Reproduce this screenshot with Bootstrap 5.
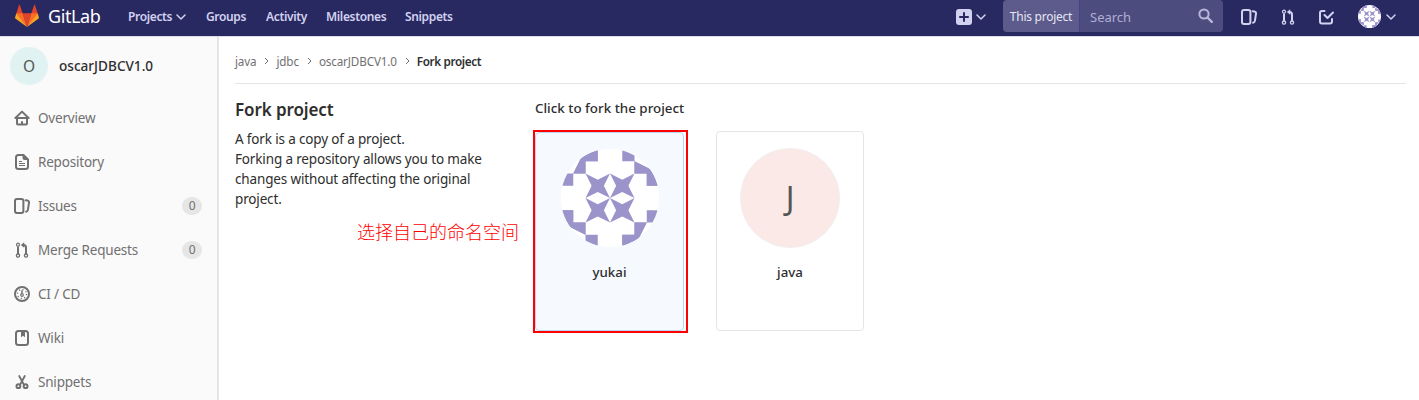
<!DOCTYPE html>
<html lang="en">
<head>
<meta charset="utf-8">
<title>Fork project · GitLab</title>
<meta name="viewport" content="width=device-width, initial-scale=1">
<link rel="stylesheet" href="https://cdn.jsdelivr.net/npm/bootstrap@5.3.0/dist/css/bootstrap.min.css">
<style>
  body { font-family: "Noto Sans", "Noto Sans CJK SC", sans-serif; font-size: 13.5px; letter-spacing: -.15px; line-height: 20px; color: #2e2e2e; background: #fff; height: 400px; overflow: hidden; }
  svg { display: block; flex: none; }
  a { text-decoration: none; color: inherit; }
  .topbar { height: 36px; background: #292961; color: #d1d1f0; box-shadow: 0 1px 0 #dcdce4; position: relative; z-index: 2; padding-left: 15px; }
  .wordmark { font-size: 18px; letter-spacing: -.4px; color: #fff; margin-left: 9px; width: 80px; line-height: 32px; }
  .topnav { font-size: 12px; font-weight: 600; line-height: 33px; letter-spacing: -.35px; }
  .topnav a { white-space: nowrap; }
  .scope { width: 77px; height: 32px; line-height: 34px; background: #5c5b8b; color: #e6e6f5; font-size: 12px; letter-spacing: -.25px; text-align: center; border-right: 1px solid #44438a; border-radius: 4px 0 0 4px; white-space: nowrap; }
  .searchbox { width: 143px; height: 32px; line-height: 34px; background: #4d4c7e; color: #b0afd4; font-size: 13px; letter-spacing: 0; padding: 0 16px 0 10px; border-radius: 0 4px 4px 0; }
  .sidebar { width: 219px; height: 364px; background: #fafafa; border-right: 2px solid #e5e5e5; flex: none; }
  .project { height: 60px; padding-left: 10px; font-weight: 500; font-size: 13.6px; letter-spacing: 0; }
  .letter { border-radius: 50%; display: flex; align-items: center; justify-content: center; color: #555; }
  .letter-sm { width: 38px; height: 38px; background: #e0f2f1; font-size: 15.5px; font-weight: 400; margin-right: 11px; }
  .letter-lg { width: 100px; height: 100px; background: #fbe9e7; font-size: 32px; border: 1px solid #f1efef; }
  .side-item { height: 44px; padding: 0 15px 0 14px; color: #707070; gap: 8px; letter-spacing: -.2px; }
  .count { width: 20px; height: 18px; line-height: 18px; border-radius: 9px; background: #e6e6e6; font-size: 12px; text-align: center; margin-left: auto; }
  .page { padding: 0 13px 0 16px; flex: 1; }
  .crumbs { height: 48px; font-size: 11.7px; border-bottom: 1px solid #e5e5e5; color: #707070; padding-top: 2px; letter-spacing: -.15px; }
  .crumbs svg { margin: 0 7px 0 8px; }
  .crumbs b { color: #2e2e2e; font-weight: 600; letter-spacing: -.35px; }
  .intro { width: 300px; flex: none; }
  .intro h4 { font-size: 17px; letter-spacing: -.1px; line-height: 20px; font-weight: 600; margin: 16px 0 9px; }
  .intro p { width: 265px; margin: 0; }
  .note { color: #f00; font-size: 18px; letter-spacing: 0; line-height: 24px; margin: 10px 0 0 122px; white-space: nowrap; font-family: "Noto Sans CJK SC", sans-serif; font-weight: 300; }
  .choose { font-size: 13.4px; letter-spacing: 0; font-weight: 500; line-height: 20px; margin-top: 14px; height: 32px; }
  .fork { width: 148px; height: 200px; border: 1px solid #e5e5e5; border-radius: 4px; padding-top: 16px; font-size: 13.3px; letter-spacing: 0; font-weight: 500; margin-top: 1px; }
  .fork-picked { border-color: #b8d6f4; background: #f6fafe; width: 149px; height: 199px; padding-top: 15px; margin: 0; }
  .outline-red { border: 2px solid #f00; width: 155px; height: 203px; margin-left: -2px; margin-right: 28px; }
  .fork .letter-lg { font-weight: 400; }
  .fork-name { margin-top: 14px; }
</style>
</head>
<body>
<svg width="0" height="0" class="position-absolute" aria-hidden="true">
  <defs>
    <symbol id="chev" viewBox="0 0 10 6"><path d="M1 1l4 4 4-4" fill="none" stroke="currentColor" stroke-width="1.5" stroke-linecap="round" stroke-linejoin="round"/></symbol>
    <symbol id="sep" viewBox="0 0 5 8"><path d="M1 1l3 3-3 3" fill="none" stroke="currentColor" stroke-width="1"/></symbol>
    <symbol id="issues" viewBox="0 0 16 16"><g fill="none" stroke="currentColor" stroke-width="2" stroke-linejoin="round" stroke-linecap="round"><rect x="1" y="1" width="8.4" height="14" rx="2"/><path d="M11.6 2.2l1.7.3q1.9.3 1.7 2.1l-1.1 7.3q-.3 1.6-1.8 1.8"/></g></symbol>
    <symbol id="merge" viewBox="0 0 16 16"><g fill="none" stroke="currentColor"><path stroke-width="2" d="M4 4.500v7.500M12 12V5.500Q12 3 9.500 3"/><circle cx="4" cy="2.700" r="1.500" stroke-width="1.200"/><circle cx="4" cy="13.600" r="1.600" stroke-width="1.300"/><circle cx="12" cy="13.600" r="1.600" stroke-width="1.300"/></g><path fill="currentColor" d="M10.200.3v5.400L6.800 3z"/></symbol>
    <symbol id="identicon" viewBox="0 0 8 8">
      <circle cx="4" cy="4" r="4" fill="#fff"/>
      <g clip-path="url(#disc)" fill="#9b94ca">
        <g id="quarter"><path d="M2 0h1v1H2v1H1zM0 2h1v1H0zM2 2l1 .5L4 2l-.5 1L4 4l-1-.5L2 4l.5-1z"/><path d="M2 0h1v1H2zM2 0v2H1z"/></g>
        <use href="#quarter" transform="rotate(90 4 4)"/><use href="#quarter" transform="rotate(180 4 4)"/><use href="#quarter" transform="rotate(270 4 4)"/>
      </g>
    </symbol>
    <clipPath id="disc"><circle cx="4" cy="4" r="4"/></clipPath>
  </defs>
</svg>

<header class="topbar d-flex align-items-start">
  <a href="#" class="d-flex">
    <svg class="mt-1" width="24" height="24" viewBox="0 0 36 36"><path fill="#e24329" d="M2 14l9.38 9v-9l-4-12.28c-.205-.632-1.176-.632-1.38 0zM34 14l-9.38 9v-9l4-12.28c.205-.632 1.176-.632 1.38 0zM18 34.38 11.38 14h13.24z"/><path fill="#fc6d26" d="M18 34.38 11.38 14H2l6 9zM18 34.38 24.62 14H34l-6 9z"/><path fill="#fca326" d="M2 14 .1 20.16c-.18.565 0 1.2.5 1.56l17.42 12.66zM34 14l1.9 6.16c.18.565 0 1.2-.5 1.56L18 34.38z"/></svg>
    <span class="wordmark">GitLab</span>
  </a>
  <nav class="topnav d-flex">
    <a href="#" class="d-flex align-items-center" style="width:78px">Projects<svg class="ms-1" width="10" height="6"><use href="#chev"/></svg></a>
    <a href="#" style="width:60px">Groups</a>
    <a href="#" style="width:60px">Activity</a>
    <a href="#" style="width:79px">Milestones</a>
    <a href="#">Snippets</a>
  </nav>
  <div class="d-flex align-items-center ms-auto" style="height:33px">
    <svg width="16" height="16" viewBox="0 0 16 16"><rect width="16" height="16" rx="3" fill="#d1d1f0"/><path d="M8 3.200v9.600M3.200 8h9.600" stroke="#292961" stroke-width="2"/></svg>
    <svg class="ms-1" style="margin-right:17px" width="10" height="6"><use href="#chev"/></svg>
  </div>
  <div class="scope">This project</div>
  <div class="searchbox d-flex justify-content-between">Search
    <svg style="margin:8px -6px 0 0" width="15" height="15" viewBox="0 0 15 15"><g fill="none" stroke="#b8b7da"><circle cx="6" cy="6" r="4.600" stroke-width="2"/><path d="M9.500 9.500l4.300 4.300" stroke-width="2.400" stroke-linecap="round"/></g></svg>
  </div>
  <div class="d-flex align-items-center" style="height:33px;width:196px;padding-left:18px">
    <svg width="16" height="16"><use href="#issues"/></svg>
    <svg style="margin-left:23px" width="16" height="16"><use href="#merge"/></svg>
    <svg style="margin-left:22px" width="16" height="16" viewBox="0 0 16 16"><g fill="none" stroke="currentColor" stroke-width="2" stroke-linecap="round" stroke-linejoin="round"><path d="M6.500 2H4Q2 2 2 4v8.500q0 2 2 2h8q2 0 2-2V10"/><path d="M6.500 6 9.500 9 15 3.500"/></g></svg>
    <svg style="margin-left:24px" width="23" height="23"><use href="#identicon"/></svg>
    <svg style="margin-left:5px" width="10" height="6"><use href="#chev"/></svg>
  </div>
</header>

<div class="d-flex">
  <aside class="sidebar">
    <a href="#" class="project d-flex align-items-center"><span class="letter letter-sm">O</span>oscarJDBCV1.0</a>
    <nav class="d-flex flex-column">
      <a href="#" class="side-item d-flex align-items-center"><svg width="16" height="16" viewBox="0 0 16 16"><g fill="none" stroke="currentColor" stroke-width="2" stroke-linejoin="round" stroke-linecap="round"><path d="M1.400 8 8 1.600 14.600 8zM3 8.500v5q0 1 1 1h8q1 0 1-1v-5"/><path d="M8 12v2" stroke-width="2"/></g></svg>Overview</a>
      <a href="#" class="side-item d-flex align-items-center"><svg width="16" height="16" viewBox="0 0 16 16"><path d="M9.500 1H4.500Q2 1 2 3.500v9q0 2.500 2.500 2.500h7q2.500 0 2.500-2.500V5.400z" fill="none" stroke="currentColor" stroke-width="2"/><path d="M8.500 1l5.500 5H10.500Q8.500 6 8.500 4z" fill="currentColor"/><path d="M5 7.500h3M5 9.500h6M5 11.500h6" stroke="currentColor"/></svg>Repository</a>
      <a href="#" class="side-item d-flex align-items-center"><svg width="16" height="16"><use href="#issues"/></svg>Issues<span class="count">0</span></a>
      <a href="#" class="side-item d-flex align-items-center"><svg width="16" height="16"><use href="#merge"/></svg>Merge Requests<span class="count">0</span></a>
      <a href="#" class="side-item d-flex align-items-center"><svg width="16" height="16" viewBox="0 0 16 16"><g fill="none" stroke="currentColor"><circle cx="8" cy="8" r="7" stroke-width="2"/><circle cx="8" cy="9" r="1.300" stroke-width="1.200"/><path d="M8 4.200v3.300" stroke-width="1.500"/><circle cx="8" cy="8" r="4.500" stroke-width="1.300" stroke-dasharray="1.100 2.434"/></g></svg>CI / CD</a>
      <a href="#" class="side-item d-flex align-items-center"><svg width="16" height="16" viewBox="0 0 16 16"><rect x="2" y="1" width="12" height="14" rx="2.500" fill="none" stroke="currentColor" stroke-width="2"/><path d="M7 1h4v6.300L9 5.800 7 7.300z" fill="currentColor"/></svg>Wiki</a>
      <a href="#" class="side-item d-flex align-items-center"><svg width="16" height="16" viewBox="0 0 16 16"><g fill="none" stroke="currentColor" stroke-linecap="round"><path d="M5.200 2l4.600 8.500M10.800 2 6.200 10.500" stroke-width="1.800"/><circle cx="4.400" cy="12.200" r="1.900" stroke-width="2"/><circle cx="11.600" cy="12.200" r="1.900" stroke-width="2"/></g></svg>Snippets</a>
    </nav>
  </aside>

  <main class="page">
    <nav class="crumbs d-flex align-items-center">
      <a href="#">java</a><svg width="5" height="8"><use href="#sep"/></svg>
      <a href="#">jdbc</a><svg width="5" height="8"><use href="#sep"/></svg>
      <a href="#">oscarJDBCV1.0</a><svg width="5" height="8"><use href="#sep"/></svg>
      <b>Fork project</b>
    </nav>
    <div class="d-flex">
      <section class="intro">
        <h4>Fork project</h4>
        <p>A fork is a copy of a project.<br>Forking a repository allows you to make changes without affecting the original project.</p>
        <div class="note" lang="zh">选择自己的命名空间</div>
      </section>
      <section>
        <div class="choose">Click to fork the project</div>
        <div class="d-flex align-items-start">
          <div class="outline-red">
            <a href="#" class="fork fork-picked d-flex flex-column align-items-center"><svg width="98" height="98" style="margin:1px"><use href="#identicon"/></svg><span class="fork-name">yukai</span></a>
          </div>
          <a href="#" class="fork d-flex flex-column align-items-center"><span class="letter letter-lg">J</span><span class="fork-name">java</span></a>
        </div>
      </section>
    </div>
  </main>
</div>
<script src="https://cdn.jsdelivr.net/npm/bootstrap@5.3.0/dist/js/bootstrap.bundle.min.js"></script>
</body>
</html>
